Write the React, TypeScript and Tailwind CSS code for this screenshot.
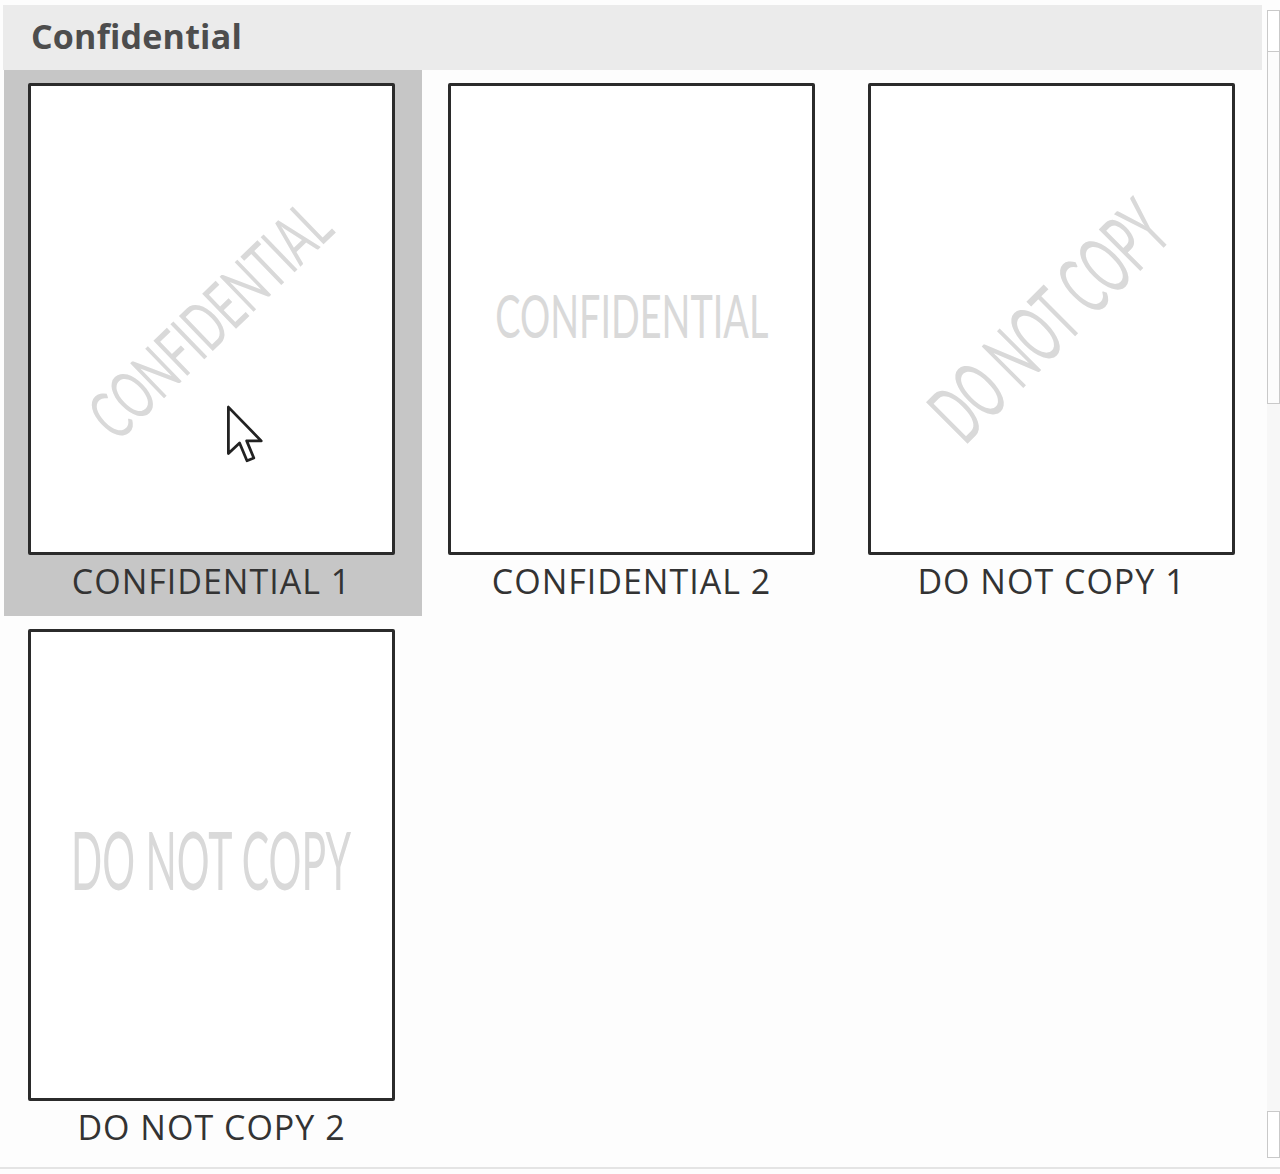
const tiles = [
  { label: 'CONFIDENTIAL 1', text: 'CONFIDENTIAL', diagonal: true, selected: true },
  { label: 'CONFIDENTIAL 2', text: 'CONFIDENTIAL', diagonal: false, selected: false },
  { label: 'DO NOT COPY 1', text: 'DO NOT COPY', diagonal: true, selected: false },
  { label: 'DO NOT COPY 2', text: 'DO NOT COPY', diagonal: false, selected: false },
]

function Watermark({ text, diagonal }: { text: string; diagonal: boolean }) {
  const conf = text === 'CONFIDENTIAL'
  if (diagonal && conf) {
    return (
      <span className="whitespace-nowrap text-[68px] leading-none text-[#d9d9d9] scale-x-[0.62] -rotate-[44deg] -translate-x-[3px]">
        {text}
      </span>
    )
  }
  if (diagonal) {
    return (
      <span className="whitespace-nowrap text-[82px] leading-none text-[#d9d9d9] scale-x-[0.53] -rotate-[45deg] -translate-x-[4px]">
        {text}
      </span>
    )
  }
  if (conf) {
    return (
      <span className="whitespace-nowrap text-[60px] leading-none text-[#d9d9d9] scale-x-[0.63] -translate-y-[4px]">
        {text}
      </span>
    )
  }
  return (
    <span className="whitespace-nowrap text-[82px] leading-none text-[#d9d9d9] scale-x-[0.5] -translate-y-[7px]">
      {text}
    </span>
  )
}

function Cursor() {
  return (
    <svg className="absolute left-[221px] top-[334px]" width="44" height="62" viewBox="0 0 14 20">
      <path d="M1 1 L1 16 L4.6 12.6 L7 18.3 L9.2 17.4 L6.9 11.9 L11.6 11.9 Z"
        fill="#fff" stroke="#222" strokeWidth="0.9" strokeLinejoin="round" />
    </svg>
  )
}

export default function App() {
  return (
    <div className="relative w-[1280px] h-[1174px] overflow-hidden bg-[#fdfdfd]" style={{ fontFamily: '"Open Sans", "Noto Sans", sans-serif' }}>
      <div className="flex">
        <div className="w-[1262px] pt-[5px] pl-[3px]">
          <div className="h-[65px] bg-[#ebebeb] flex items-center pl-[28px] pb-[3px]">
            <span className="text-[34px] font-bold text-[#4d4d4d] tracking-[0.2px]">Confidential</span>
          </div>
          <div className="grid grid-cols-[420px_420px_420px] pl-[1px]">
            {tiles.map(t => (
              <div key={t.label}
                className={`relative h-[546px] w-[418px] flex flex-col pt-[13px] ${t.selected ? 'bg-[#c6c6c6]' : ''}`}>
                <div className="ml-[24px] w-[367px] h-[472px] bg-white border-[3px] border-[#2b2b2b] rounded-[2px] flex items-center justify-center overflow-hidden"
                  style={{ fontFamily: 'Lato, "Liberation Sans", sans-serif' }}>
                  <Watermark text={t.text} diagonal={t.diagonal} />
                </div>
                <div className="w-[415px] mt-[6px] text-center text-[34px] leading-[40px] text-[#333] tracking-[1px]">{t.label}</div>
                {t.selected && <Cursor />}
              </div>
            ))}
          </div>
        </div>
        <div className="ml-[5px] pt-[10px] w-[20px] h-[1158px] flex flex-col">
          <div className="h-[42px] border border-[#c9c9c9] bg-white" />
          <div className="h-[352px] border-x border-b border-[#c9c9c9] bg-[#fcfcfc]" />
          <div className="flex-1 bg-[#f7f7f7]" />
          <div className="h-[47px] border border-[#c9c9c9] bg-white" />
        </div>
      </div>
      <div className="mt-[5px] h-[2px] bg-[#e4e4e4]" />
    </div>
  )
}
